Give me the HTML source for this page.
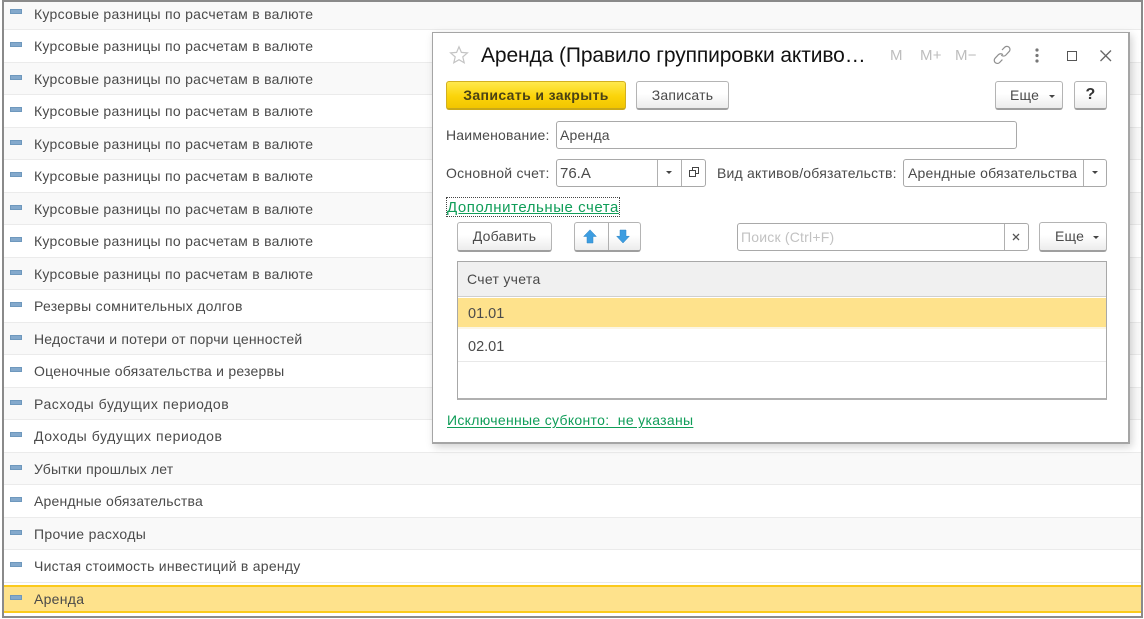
<!DOCTYPE html>
<html lang="ru"><head><meta charset="utf-8"><title>Аренда</title>
<style>
html,body{margin:0;padding:0}
body{width:1144px;height:619px;position:relative;overflow:hidden;background:#fff;font:14px "Liberation Sans",sans-serif;color:#4a4a4a}
.a,.r,.t,.b,.i,.l{position:absolute}
.r{left:3px;width:1139px;height:32.5px;border-bottom:1px solid #ebebeb;box-sizing:border-box}
.r.g{background:#f9f9f9}
.m{position:absolute;left:7px;top:12px;width:12px;height:5px;background:#84a9cc;border:1px solid #6e98bd;box-sizing:border-box}
.r span{position:absolute;left:31px;top:7px;line-height:18px;white-space:nowrap;letter-spacing:.28px}
.t{white-space:nowrap;line-height:18px;letter-spacing:.2px}
.b{box-sizing:border-box;border:1px solid #b4b4b4;border-bottom:2px solid #9f9f9f;border-radius:3px;background:linear-gradient(#fff,#fff 45%,#ececec);text-align:center;color:#4a4a4a;line-height:25px;white-space:nowrap;letter-spacing:.2px}
.i{box-sizing:border-box;border:1px solid #a9a9a9;border-radius:3px;background:#fff}
.l{background:#b0b0b0}
.tri{position:absolute;width:0;height:0;border-left:3px solid transparent;border-right:3px solid transparent;border-top:3px solid #444}
.lnk{color:#0f9d58;text-decoration:underline;text-underline-offset:2px}
</style></head><body>
<div class="r g" style="top:-3px;height:33px"><div class="m" style="top:12px"></div><span style="top:8px">Курсовые разницы по расчетам в валюте</span></div>
<div class="r" style="top:30px"><div class="m"></div><span>Курсовые разницы по расчетам в валюте</span></div>
<div class="r g" style="top:62.5px"><div class="m"></div><span>Курсовые разницы по расчетам в валюте</span></div>
<div class="r" style="top:95px"><div class="m"></div><span>Курсовые разницы по расчетам в валюте</span></div>
<div class="r g" style="top:127.5px"><div class="m"></div><span>Курсовые разницы по расчетам в валюте</span></div>
<div class="r" style="top:160px"><div class="m"></div><span>Курсовые разницы по расчетам в валюте</span></div>
<div class="r g" style="top:192.5px"><div class="m"></div><span>Курсовые разницы по расчетам в валюте</span></div>
<div class="r" style="top:225px"><div class="m"></div><span>Курсовые разницы по расчетам в валюте</span></div>
<div class="r g" style="top:257.5px"><div class="m"></div><span>Курсовые разницы по расчетам в валюте</span></div>
<div class="r" style="top:290px"><div class="m"></div><span>Резервы сомнительных долгов</span></div>
<div class="r g" style="top:322.5px"><div class="m"></div><span style="letter-spacing:.2px">Недостачи и потери от порчи ценностей</span></div>
<div class="r" style="top:355px"><div class="m"></div><span style="letter-spacing:.22px">Оценочные обязательства и резервы</span></div>
<div class="r g" style="top:387.5px"><div class="m"></div><span style="letter-spacing:.57px">Расходы будущих периодов</span></div>
<div class="r" style="top:420px"><div class="m"></div><span style="letter-spacing:.58px">Доходы будущих периодов</span></div>
<div class="r g" style="top:452.5px"><div class="m"></div><span style="letter-spacing:.17px">Убытки прошлых лет</span></div>
<div class="r" style="top:485px"><div class="m"></div><span style="letter-spacing:.19px">Арендные обязательства</span></div>
<div class="r g" style="top:517.5px"><div class="m"></div><span style="letter-spacing:.35px">Прочие расходы</span></div>
<div class="r" style="top:550px"><div class="m"></div><span style="letter-spacing:.25px">Чистая стоимость инвестиций в аренду</span></div>
<div class="r" style="top:585px;height:28px;background:#fee28c;border-top:2px solid #fbca1c;border-bottom:2px solid #fbca1c"><div class="m" style="top:8px"></div><span style="top:3px">Аренда</span></div>
<div class="a" style="left:2px;top:0;width:1141px;height:618px;box-sizing:border-box;border:2px solid #8a8a8a"></div>

<!-- dialog -->
<div class="a" style="left:432px;top:32px;width:698px;height:412px;box-sizing:border-box;background:#fff;border:1px solid #a5a5a5;border-right:2px solid #a5a5a5;border-bottom:2px solid #a5a5a5;box-shadow:2px 3px 8px rgba(0,0,0,.18)"></div>

<svg class="a" style="left:449px;top:45px" width="20" height="20" viewBox="0 0 20 20"><path d="M10 1.8l2.4 5.6 6 .5-4.6 4 1.4 5.9-5.2-3.1-5.2 3.1 1.4-5.9-4.6-4 6-.5z" fill="none" stroke="#c4c4c4" stroke-width="1.2"/></svg>
<div class="t" style="left:481px;top:43px;font-size:21px;line-height:26px;color:#111;letter-spacing:-.11px">Аренда (Правило группировки активо…</div>
<div class="t" style="left:890px;top:47px;color:#bdbdbd;font-size:15px;letter-spacing:0">M</div>
<div class="t" style="left:920px;top:47px;color:#bdbdbd;font-size:15px;letter-spacing:.3px">M+</div>
<div class="t" style="left:955px;top:47px;color:#bdbdbd;font-size:15px;letter-spacing:.3px">M−</div>
<svg class="a" style="left:992px;top:45px" width="20" height="20" viewBox="0 0 20 20" fill="none" stroke="#8f8f8f" stroke-width="1.2"><path d="M10 5l2.6-2.7a3.1 3.1 0 0 1 4.5 4.3l-3.3 3.5a3.1 3.1 0 0 1-4.5 0"/><path d="M10.4 14.6L7.6 17.5a3.1 3.1 0 0 1-4.5-4.3l3.3-3.5a3.1 3.1 0 0 1 4.5 0"/></svg>
<svg class="a" style="left:1032px;top:47px" width="10" height="17"><circle cx="5" cy="3" r="1.6" fill="#777"/><circle cx="5" cy="8.5" r="1.6" fill="#777"/><circle cx="5" cy="14" r="1.6" fill="#777"/></svg>
<div class="a" style="left:1067px;top:51px;width:10px;height:10px;box-sizing:border-box;border:1.5px solid #555"></div>
<svg class="a" style="left:1099px;top:49px" width="14" height="14" fill="none" stroke="#666" stroke-width="1.3"><path d="M1.5 1.5l10.5 10.5M12 1.5L1.5 12"/></svg>

<div class="b" style="left:446px;top:81px;width:180px;height:29px;background:linear-gradient(#ffe94d,#fbd40a 55%,#f2c500);border:1px solid #d2b020;border-bottom:2px solid #c9a818;font-weight:bold;color:#4a4215;line-height:26px;letter-spacing:.38px">Записать и закрыть</div>
<div class="b" style="left:636px;top:81px;width:93px;height:29px;line-height:26px">Записать</div>
<div class="b" style="left:995px;top:81px;width:68px;height:29px;line-height:26px;text-align:left;padding-left:14px">Еще<div class="tri" style="left:53px;top:13px"></div></div>
<div class="b" style="left:1074px;top:81px;width:33px;height:29px;line-height:26px;font-weight:bold;font-size:16px;color:#333">?</div>

<div class="t" style="left:446px;top:126px">Наименование:</div>
<div class="i" style="left:556px;top:121px;width:461px;height:28px"></div>
<div class="t" style="left:560px;top:126px">Аренда</div>

<div class="t" style="left:446px;top:164px;letter-spacing:.27px">Основной счет:</div>
<div class="i" style="left:556px;top:159px;width:150px;height:28px"></div>
<div class="l" style="left:657px;top:160px;width:1px;height:26px"></div>
<div class="l" style="left:681px;top:160px;width:1px;height:26px"></div>
<div class="t" style="left:560px;top:165px;font-size:15px;letter-spacing:0">76.А</div>
<div class="tri" style="left:666px;top:171px"></div>
<svg class="a" style="left:688px;top:166px" width="12" height="12" fill="none" stroke="#444" stroke-width="1"><path d="M4.5 4V1.5h6v6H8M1.5 4.5h6v6h-6z"/></svg>
<div class="t" style="left:717px;top:164px">Вид активов/обязательств:</div>
<div class="i" style="left:903px;top:159px;width:204px;height:28px"></div>
<div class="l" style="left:1083px;top:160px;width:1px;height:26px"></div>
<div class="t" style="left:908px;top:164px;letter-spacing:.2px">Арендные обязательства</div>
<div class="tri" style="left:1092px;top:171px"></div>

<div class="a" style="left:446px;top:197px;width:174px;height:20px;box-sizing:border-box;border:1px dotted #444"></div>
<div class="t lnk" style="left:447px;top:199px;font-size:15px;letter-spacing:.55px;text-underline-offset:1px">Дополнительные счета</div>

<div class="b" style="left:457px;top:222px;width:95px;height:30px;line-height:27px">Добавить</div>
<div class="b" style="left:574px;top:222px;width:67px;height:30px"></div>
<div class="l" style="left:608px;top:223px;width:1px;height:27px"></div>
<svg class="a" style="left:583px;top:229px" width="14" height="15"><path d="M7 .8l6.4 6.7H10V14H4V7.5H.6z" fill="#3d9de0" stroke="#2f86c6" stroke-width=".5"/></svg>
<svg class="a" style="left:616px;top:229px" width="14" height="15"><path d="M7 14L.6 7.2H4V1h6v6.2h3.4z" fill="#3d9de0" stroke="#2f86c6" stroke-width=".5"/></svg>

<div class="i" style="left:737px;top:223px;width:292px;height:28px"></div>
<div class="l" style="left:1004px;top:224px;width:1px;height:26px"></div>
<div class="t" style="left:741px;top:228px;color:#c2c2c2;letter-spacing:.2px">Поиск (Ctrl+F)</div>
<svg class="a" style="left:1012px;top:233px" width="8" height="8" stroke="#555" stroke-width="1.3"><path d="M1 1l6 6M7 1L1 7"/></svg>
<div class="b" style="left:1039px;top:222px;width:68px;height:30px;line-height:27px;text-align:left;padding-left:15px">Еще<div class="tri" style="left:53px;top:13px"></div></div>

<div class="a" style="left:457px;top:261px;width:650px;height:139px;box-sizing:border-box;border:1px solid #a8a8a8;border-bottom:2px solid #b0b0b0;background:#fff"></div>
<div class="a" style="left:458px;top:262px;width:648px;height:35px;background:#f0f0f0;border-bottom:1px solid #cfcfcf;box-sizing:border-box"></div>
<div class="t" style="left:467px;top:270px;letter-spacing:.3px">Счет учета</div>
<div class="a" style="left:458px;top:298px;width:648px;height:29px;background:#fee28c"></div>
<div class="a" style="left:458px;top:327px;width:648px;height:2px;background:#fbf6e6"></div>
<div class="t" style="left:468px;top:305px;font-size:14.5px;letter-spacing:0">01.01</div>
<div class="t" style="left:468px;top:338px;font-size:14.5px;letter-spacing:0">02.01</div>
<div class="a" style="left:458px;top:361px;width:648px;height:1px;background:#e8e8e8"></div>

<div class="t lnk" style="left:447px;top:411px;letter-spacing:.31px">Исключенные субконто:&nbsp; не указаны</div>
</body></html>
